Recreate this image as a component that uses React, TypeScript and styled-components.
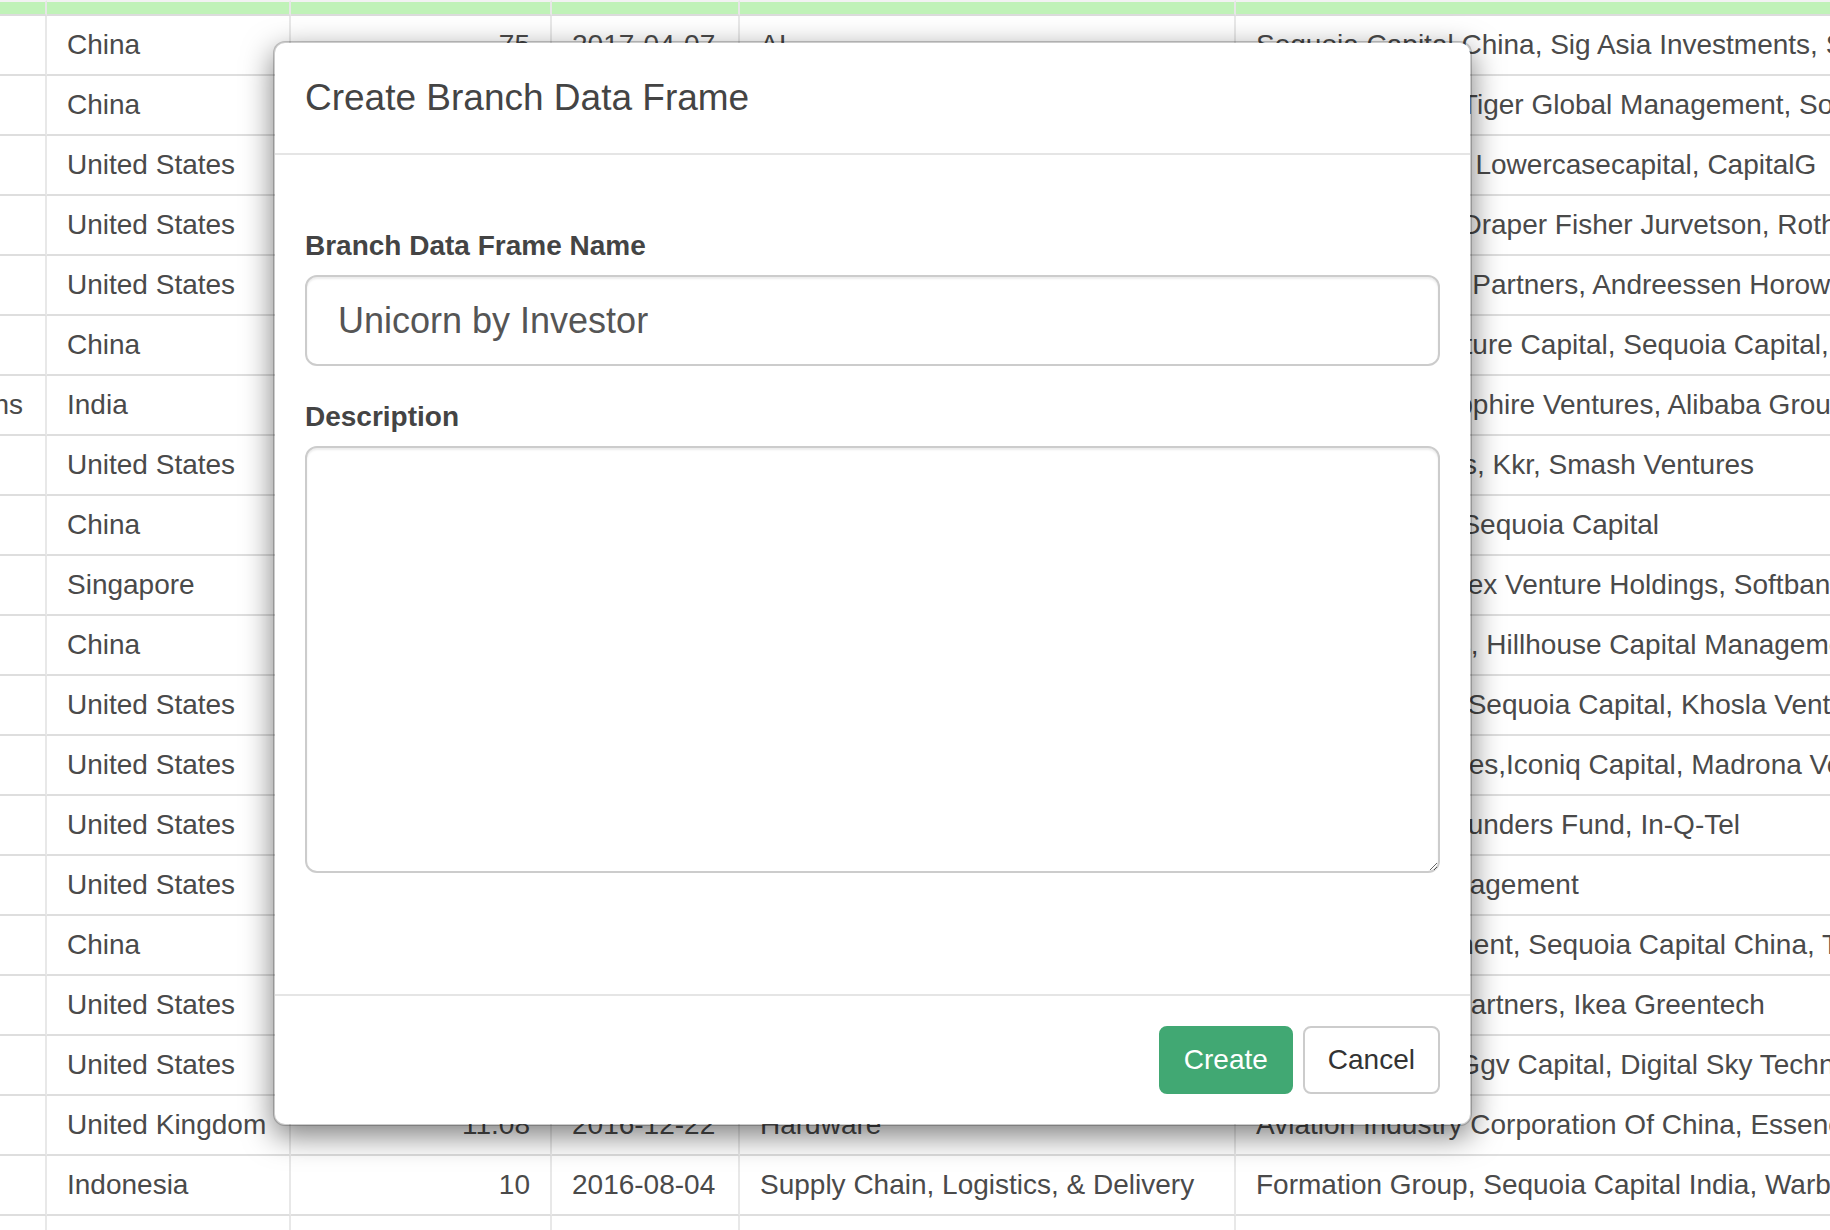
import React from "react";
import styled, { createGlobalStyle } from "styled-components";

const Global = createGlobalStyle`
  html, body {
    margin: 0;
    padding: 0;
    overflow: hidden;
    background: #fff;
  }
  body {
    font-family: "Liberation Sans", Arial, Helvetica, sans-serif;
    color: #4a4a4a;
  }
  * {
    box-sizing: border-box;
  }
`;

const Page = styled.div`
  position: relative;
  width: 1830px;
  height: 1230px;
  overflow: hidden;
`;

const COLS = "47px 244px 261px 188px 496px 1100px";

const Table = styled.div`
  display: grid;
  grid-template-columns: ${COLS};
  width: max-content;
`;

const HeadCell = styled.div`
  height: 16px;
  border-top: 2px solid #f2f2f2;
  background: #c0f2b8;
  border-bottom: 2px solid #dcdcdc;
  border-right: 2px solid #e6e6e6;
`;

const Cell = styled.div<{ $align?: "left" | "right"; $clipStart?: boolean }>`
  height: 60px;
  display: flex;
  align-items: center;
  justify-content: ${({ $align, $clipStart }) =>
    $align === "right" || $clipStart ? "flex-end" : "flex-start"};
  padding: 0 ${({ $clipStart }) => ($clipStart ? "22px" : "20px")};
  border-bottom: 2px solid #dedede;
  border-right: 2px solid #e8e8e8;
  font-size: 28px;
  white-space: nowrap;
  overflow: hidden;
  color: #4a4a4a;
`;

const Modal = styled.div`
  position: absolute;
  left: 273px;
  top: 41px;
  width: 1199px;
  display: flex;
  flex-direction: column;
  background: #fff;
  border: 2px solid rgba(0, 0, 0, 0.2);
  border-radius: 12px;
  box-shadow: 0 10px 30px rgba(0, 0, 0, 0.5);
  background-clip: padding-box;
`;

const Header = styled.div`
  padding: 29px 30px 30px;
  border-bottom: 2px solid #e5e5e5;
  h4 {
    margin: 0;
    font-size: 37px;
    line-height: 51px;
    font-weight: 500;
    color: #444;
  }
`;

const Body = styled.div`
  padding: 72px 30px 121px;
  display: flex;
  flex-direction: column;
`;

const Group = styled.div<{ $last?: boolean }>`
  display: flex;
  flex-direction: column;
  margin-bottom: ${({ $last }) => ($last ? "0" : "32px")};
`;

const Label = styled.label`
  font-size: 28px;
  line-height: 37px;
  font-weight: bold;
  color: #444;
  margin-bottom: 11px;
`;

const Input = styled.input`
  height: 91px;
  padding: 0 31px;
  font-family: inherit;
  font-size: 36px;
  color: #555;
  border: 2px solid #ccc;
  border-radius: 12px;
  box-shadow: inset 0 2px 2px rgba(0, 0, 0, 0.075);
  outline: none;
`;

const TextArea = styled.textarea`
  height: 427px;
  padding: 12px 24px;
  font-family: inherit;
  font-size: 28px;
  color: #555;
  border: 2px solid #ccc;
  border-radius: 12px;
  box-shadow: inset 0 2px 2px rgba(0, 0, 0, 0.075);
  resize: vertical;
  outline: none;
`;

const Footer = styled.div`
  display: flex;
  justify-content: flex-end;
  gap: 10px;
  padding: 30px;
  border-top: 2px solid #e5e5e5;
`;

const Button = styled.button<{ $primary?: boolean }>`
  height: 68px;
  padding: 0 23px;
  font-family: inherit;
  font-size: 28px;
  border-radius: 8px;
  border: 2px solid ${({ $primary }) => ($primary ? "#41a873" : "#ccc")};
  background: ${({ $primary }) => ($primary ? "#41a873" : "#fff")};
  color: ${({ $primary }) => ($primary ? "#fff" : "#333")};
  cursor: pointer;
`;

type Row = {
  cat?: string;
  country: string;
  val: string;
  date: string;
  ind: string;
  inv: string;
};

const rows: Row[] = [
  { country: "China", val: "75", date: "2017-04-07", ind: "AI", inv: "Sequoia Capital China, Sig Asia Investments, Sina Weibo, Softbank Group" },
  { country: "China", val: "56", date: "2014-12-31", ind: "Auto & transportation", inv: "Matrix Partners, Tiger Global Management, Softbank Corp." },
  { country: "United States", val: "36", date: "2014-01-23", ind: "Fintech", inv: "Khosla Ventures, Lowercasecapital, CapitalG" },
  { country: "United States", val: "33.3", date: "2012-12-01", ind: "Other", inv: "Founders Fund, Draper Fisher Jurvetson, Rothenberg Ventures" },
  { country: "United States", val: "31", date: "2011-07-26", ind: "Travel", inv: "General Catalyst Partners, Andreessen Horowitz, Eniac Ventures" },
  { country: "China", val: "30", date: "2015-04-02", ind: "E-commerce & direct-to-consumer", inv: "Morningside Venture Capital, Sequoia Capital, Tencent Holdings" },
  { cat: "Mobile & telecommunications", country: "India", val: "16", date: "2015-05-18", ind: "Fintech", inv: "Tiger Global, Sapphire Ventures, Alibaba Group" },
  { country: "United States", val: "15", date: "2016-12-12", ind: "Internet software & services", inv: "Obvious Ventures, Kkr, Smash Ventures" },
  { country: "China", val: "14", date: "2018-01-10", ind: "Hardware", inv: "Matrix Partners, Sequoia Capital" },
  { country: "Singapore", val: "14", date: "2014-12-02", ind: "Auto & transportation", inv: "Ggv Capital, Vertex Venture Holdings, Softbank Group" },
  { country: "China", val: "12", date: "2015-09-23", ind: "Edtech", inv: "Tencent Holdings, Hillhouse Capital Management" },
  { country: "United States", val: "12", date: "2015-09-20", ind: "Fintech", inv: "Insight Partners, Sequoia Capital, Khosla Ventures" },
  { country: "United States", val: "11.8", date: "2014-11-06", ind: "Internet software & services", inv: "Tcv, Index Ventures,Iconiq Capital, Madrona Venture Group" },
  { country: "United States", val: "11", date: "2011-05-01", ind: "Data management & analytics", inv: "Rre Ventures, Founders Fund, In-Q-Tel" },
  { country: "United States", val: "11", date: "2016-04-07", ind: "Consumer & retail", inv: "Tiger Global  Management" },
  { country: "China", val: "11", date: "2017-06-19", ind: "E-commerce & direct-to-consumer", inv: "Temasek Investment, Sequoia Capital China, Tencent Holdings" },
  { country: "United States", val: "11", date: "2014-12-09", ind: "Hardware", inv: "Kleiner Perkins Partners, Ikea Greentech" },
  { country: "United States", val: "11", date: "2014-07-22", ind: "E-commerce & direct-to-consumer", inv: "Index Ventures, Ggv Capital, Digital Sky Technologies" },
  { country: "United Kingdom", val: "11.08", date: "2016-12-22", ind: "Hardware", inv: "Aviation Industry Corporation Of China, Essence Financial, Jiangsu Sha Steel Group" },
  { country: "Indonesia", val: "10", date: "2016-08-04", ind: "Supply Chain, Logistics, & Delivery", inv: "Formation Group, Sequoia Capital India, Warburg Pincus" },
  { country: "", val: "", date: "", ind: "", inv: "" },
];

export default function App() {
  return (
    <Page>
      <Global />
      <Table>
        {Array.from({ length: 6 }).map((_, i) => (
          <HeadCell key={`h${i}`} />
        ))}
        {rows.map((r, i) => (
          <React.Fragment key={i}>
            <Cell $clipStart>{r.cat ?? ""}</Cell>
            <Cell>{r.country}</Cell>
            <Cell $align="right">{r.val}</Cell>
            <Cell>{r.date}</Cell>
            <Cell>{r.ind}</Cell>
            <Cell>{r.inv}</Cell>
          </React.Fragment>
        ))}
      </Table>

      <Modal>
        <Header>
          <h4>Create Branch Data Frame</h4>
        </Header>
        <Body>
          <Group>
            <Label>Branch Data Frame Name</Label>
            <Input defaultValue="Unicorn by Investor" />
          </Group>
          <Group $last>
            <Label>Description</Label>
            <TextArea />
          </Group>
        </Body>
        <Footer>
          <Button $primary>Create</Button>
          <Button>Cancel</Button>
        </Footer>
      </Modal>
    </Page>
  );
}
